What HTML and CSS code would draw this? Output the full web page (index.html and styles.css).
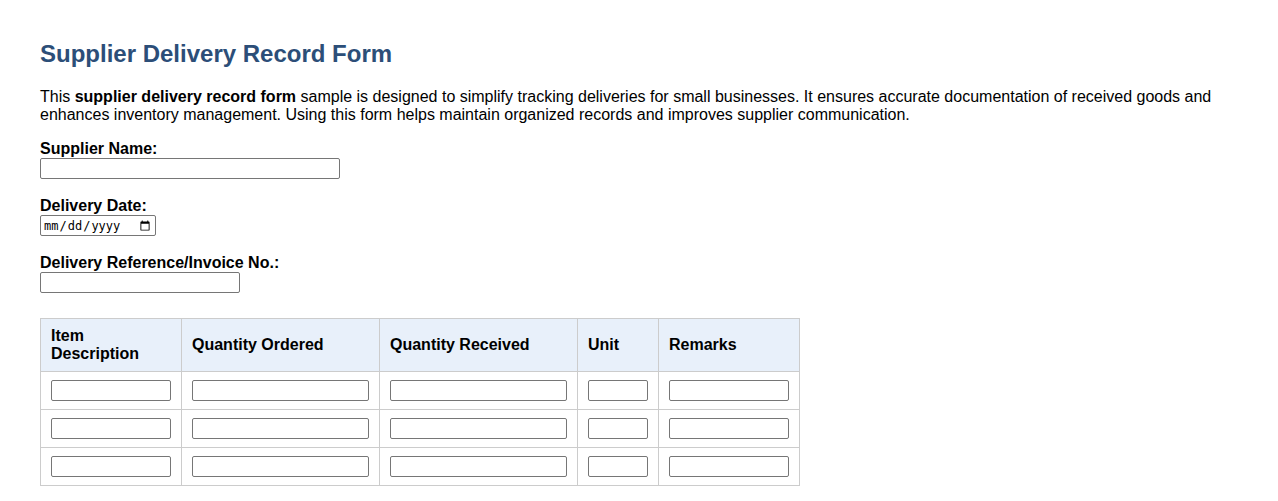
FILE: index.html
```html
<!DOCTYPE html>
<html>
<head>
<meta charset="utf-8">
<link rel="stylesheet" href="styles.css">
</head>
<body>
<div class="page">
  <h1 class="title">Supplier Delivery Record Form</h1>
  <p class="intro">This <strong>supplier delivery record form</strong> sample is designed to simplify tracking deliveries for small businesses. It ensures accurate documentation of received goods and enhances inventory management. Using this form helps maintain organized records and improves supplier communication.</p>
  <form class="form">
    <div class="group">
      <label class="label">Supplier Name:</label>
      <input type="text" class="field field-name">
    </div>
    <div class="group">
      <label class="label">Delivery Date:</label>
      <input type="date" class="field field-date">
    </div>
    <div class="group">
      <label class="label">Delivery Reference/Invoice No.:</label>
      <input type="text" class="field field-ref">
    </div>
    <table class="items">
      <thead>
        <tr>
          <th class="c1">Item<br>Description</th>
          <th class="c2">Quantity Ordered</th>
          <th class="c3">Quantity Received</th>
          <th class="c4">Unit</th>
          <th class="c5">Remarks</th>
        </tr>
      </thead>
      <tbody>
        <tr>
          <td><input type="text" class="cell-input"></td>
          <td><input type="text" class="cell-input"></td>
          <td><input type="text" class="cell-input"></td>
          <td><input type="text" class="cell-input"></td>
          <td><input type="text" class="cell-input"></td>
        </tr>
        <tr>
          <td><input type="text" class="cell-input"></td>
          <td><input type="text" class="cell-input"></td>
          <td><input type="text" class="cell-input"></td>
          <td><input type="text" class="cell-input"></td>
          <td><input type="text" class="cell-input"></td>
        </tr>
        <tr>
          <td><input type="text" class="cell-input"></td>
          <td><input type="text" class="cell-input"></td>
          <td><input type="text" class="cell-input"></td>
          <td><input type="text" class="cell-input"></td>
          <td><input type="text" class="cell-input"></td>
        </tr>
      </tbody>
    </table>
  </form>
</div>
</body>
</html>
```
FILE: styles.css
```css
html, body {
  margin: 0;
  padding: 0;
  background: #fff;
}
body {
  font-family: "Liberation Sans", Arial, sans-serif;
  font-size: 16px;
  color: #000;
}
.page {
  padding: 40px 40px 0 40px;
}
.title {
  margin: 0 0 20px 0;
  font-size: 24px;
  font-weight: bold;
  color: #2c4e78;
  line-height: 28px;
}
.intro {
  margin: 0 0 16px 0;
  line-height: 18px;
}
.form {
  display: flex;
  flex-direction: column;
  align-items: flex-start;
}
.group {
  display: flex;
  flex-direction: column;
  align-items: flex-start;
  margin-bottom: 18px;
}
.label {
  font-weight: bold;
  line-height: 18px;
}
.field {
  box-sizing: border-box;
  height: 21px;
  border: 1px solid #767676;
  border-radius: 2px;
  padding: 1px 2px;
  font-size: 13.33px;
  margin: 0;
}
.field-name { width: 300px; }
.field-date { width: 116px; font-size: 12px; font-family: "DejaVu Sans Mono", monospace; padding: 0 2px; }
.field-ref { width: 200px; }
.items {
  margin-top: 7px;
  border-collapse: collapse;
  table-layout: fixed;
  width: 760px;
}
.items th, .items td {
  border: 1px solid #ccc;
  padding: 8px 10px;
  text-align: left;
}
.items th {
  background: #e8f0fa;
  font-weight: bold;
  line-height: 18px;
  height: 36px;
}
.items td {
  height: 21px;
  line-height: 0;
}
.c1 { width: 120px; }
.c2 { width: 177px; }
.c3 { width: 177px; }
.c4 { width: 60px; }
.c5 { width: 120px; }
.cell-input {
  box-sizing: border-box;
  width: 100%;
  height: 21px;
  border: 1px solid #767676;
  border-radius: 2px;
  padding: 1px 2px;
  margin: 0;
  font-size: 13.33px;
}
```
